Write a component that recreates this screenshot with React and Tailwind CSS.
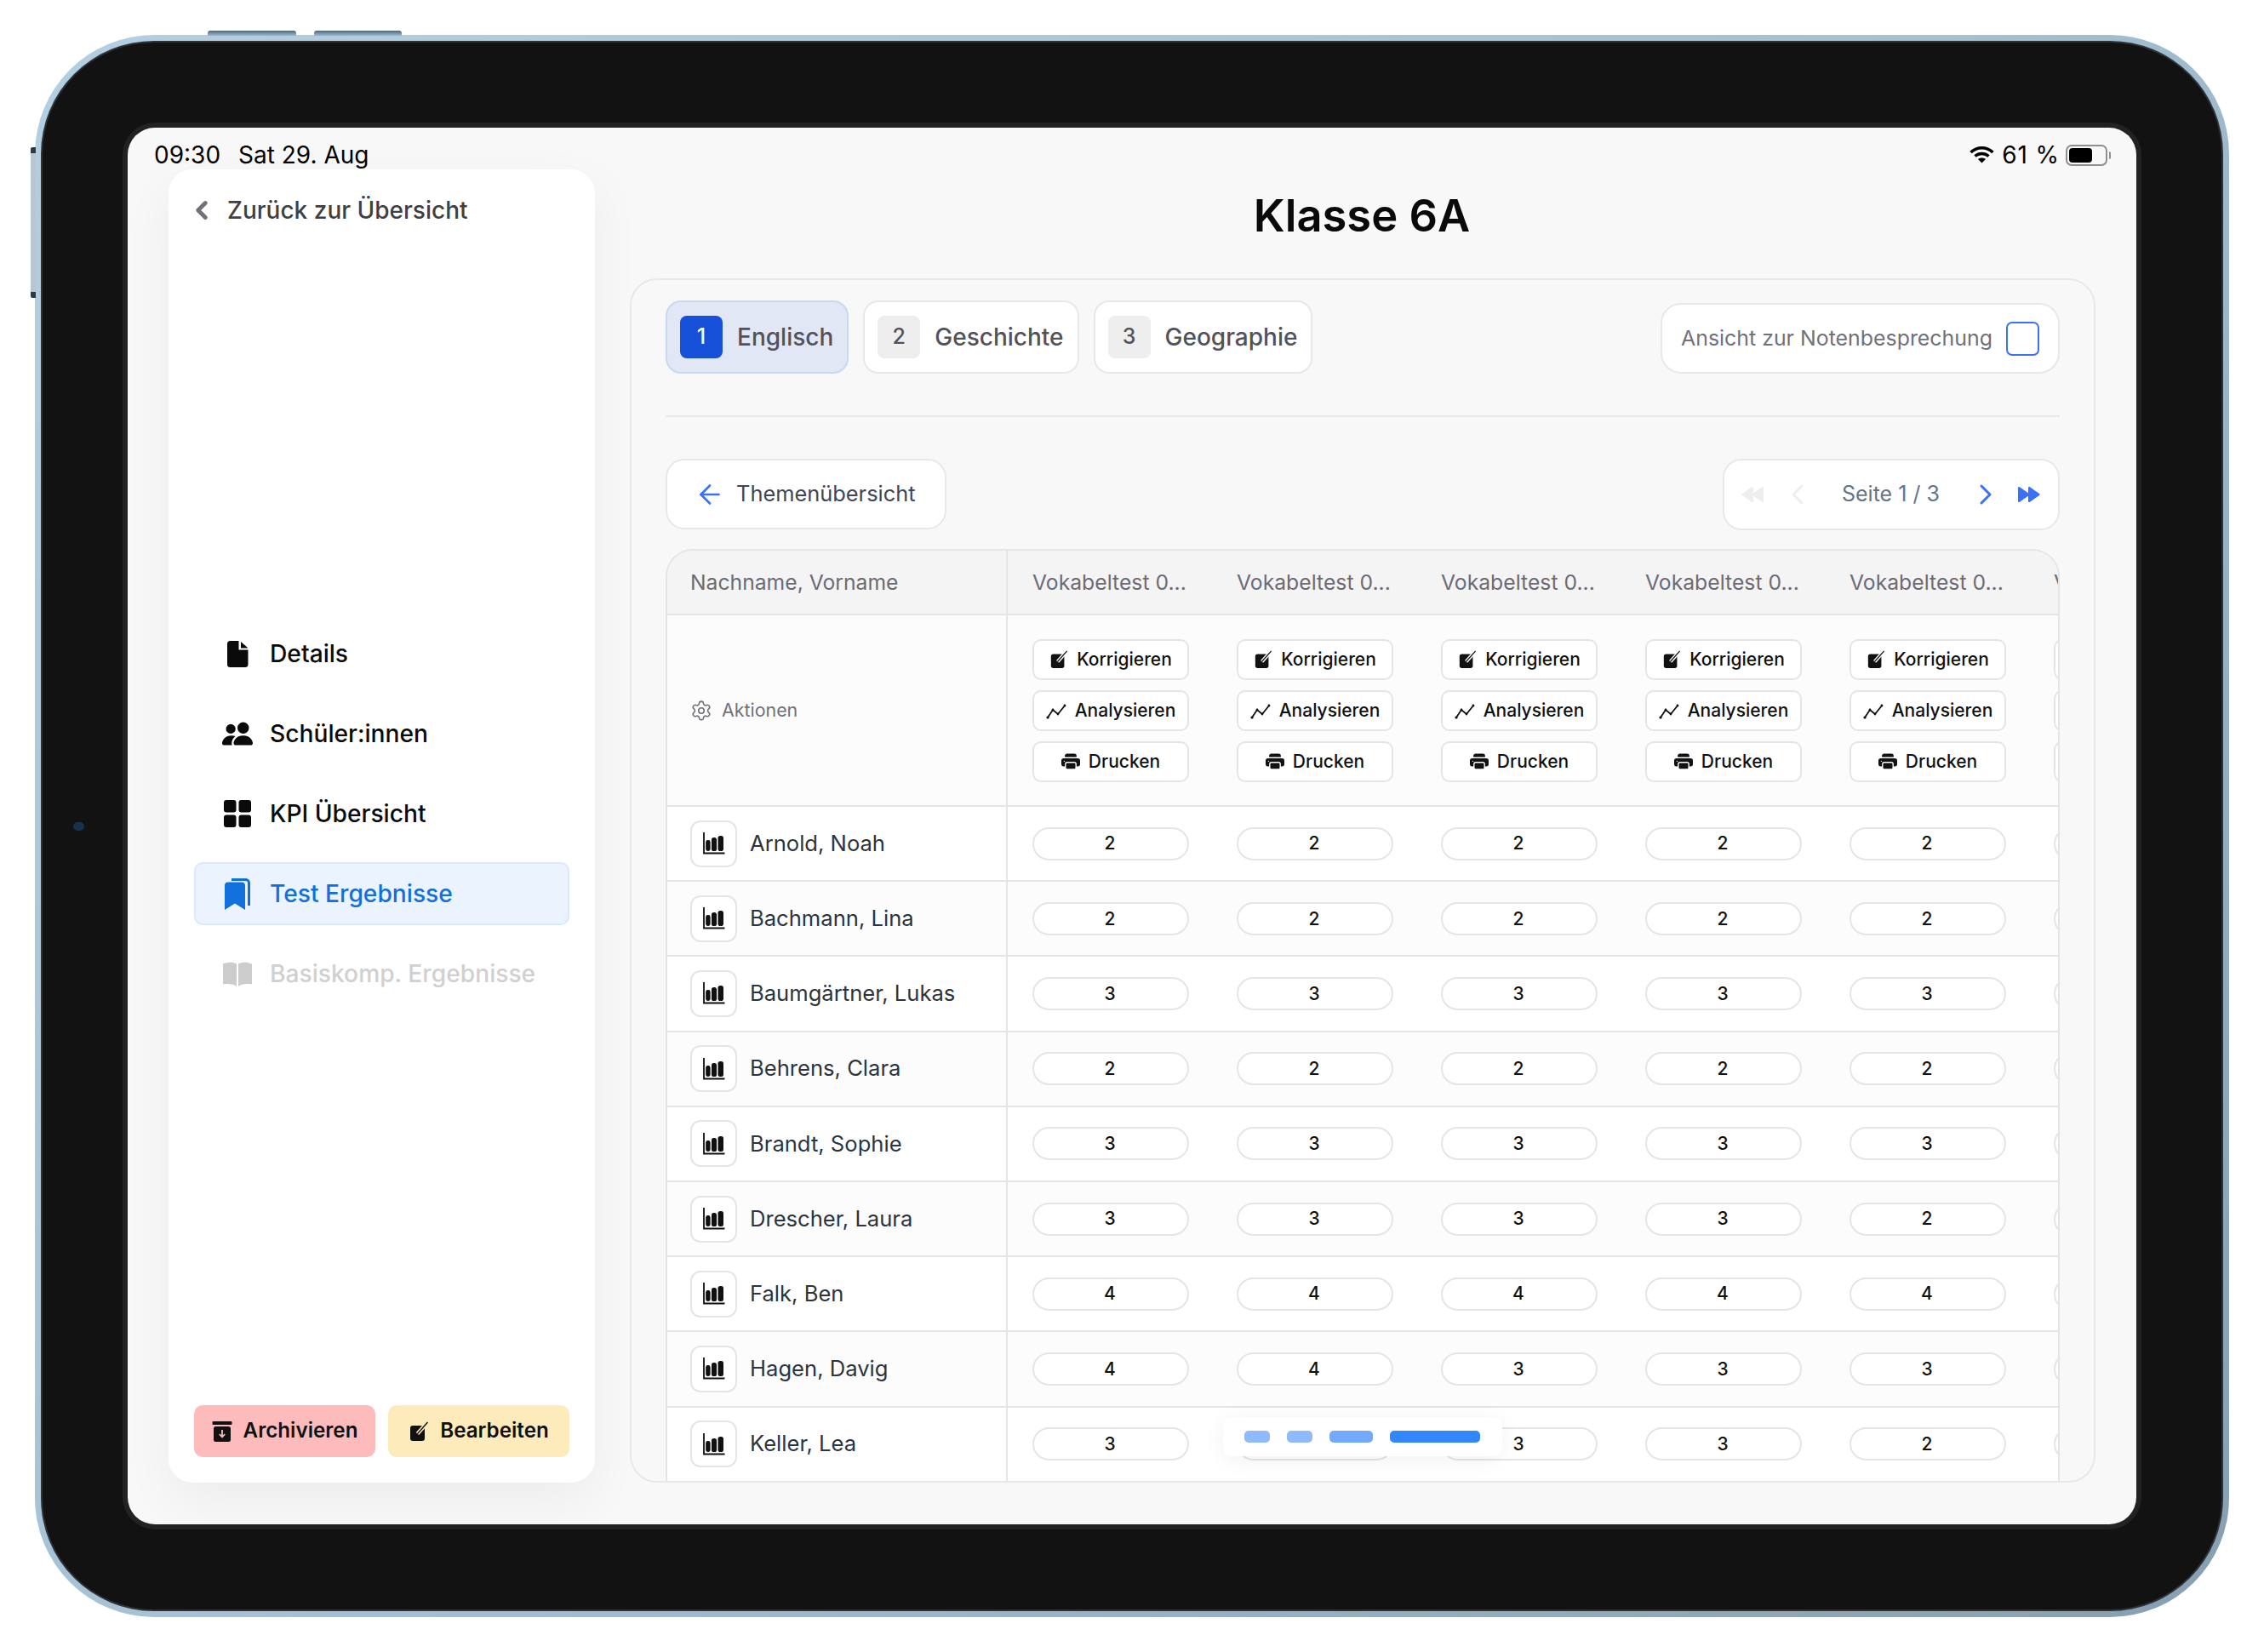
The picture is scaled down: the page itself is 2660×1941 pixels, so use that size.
import React from 'react'
import { ChevronLeft, ChevronRight, ArrowLeft, Settings } from 'lucide-react'
import { BsPeopleFill, BsPrinterFill } from 'react-icons/bs'

const students = [
  ['Arnold, Noah', [2, 2, 2, 2, 2]],
  ['Bachmann, Lina', [2, 2, 2, 2, 2]],
  ['Baumgärtner, Lukas', [3, 3, 3, 3, 3]],
  ['Behrens, Clara', [2, 2, 2, 2, 2]],
  ['Brandt, Sophie', [3, 3, 3, 3, 3]],
  ['Drescher, Laura', [3, 3, 3, 3, 2]],
  ['Falk, Ben', [4, 4, 4, 4, 4]],
  ['Hagen, Davig', [4, 4, 3, 3, 3]],
  ['Keller, Lea', [3, 3, 3, 3, 2]],
]

const columns = [0, 1, 2, 3, 4, 5]

const PenNote = ({ size = 22 }) => (
  <svg width={size} height={size} viewBox="0 0 24 24">
    <rect x="2" y="5" width="17" height="18" rx="3" fill="#111" />
    <path d="M10.5 14.5 L22.5 1" stroke="#fff" strokeWidth="4.5" />
    <path d="M10.5 14.5 L22.5 1" stroke="#111" strokeWidth="1.4" />
  </svg>
)

const PenNoteYellow = () => (
  <svg width="24" height="24" viewBox="0 0 24 24">
    <rect x="2" y="5" width="17" height="18" rx="3" fill="#111" />
    <path d="M10.5 14.5 L22.5 1" stroke="#feebbb" strokeWidth="4.5" />
    <path d="M10.5 14.5 L22.5 1" stroke="#111" strokeWidth="1.4" />
  </svg>
)

const ChartLine = () => (
  <svg width="24" height="20" viewBox="0 0 24 20" fill="none">
    <path d="M2 18 L8 9 L14 14 L22 4" stroke="#111" strokeWidth="1.8" />
    <circle cx="2" cy="18" r="1.6" fill="#111" />
    <circle cx="8" cy="9" r="1.4" fill="#111" />
    <circle cx="14" cy="14" r="1.4" fill="#111" />
    <circle cx="22" cy="4" r="1.4" fill="#111" />
  </svg>
)

const BarsIcon = () => (
  <svg width="26" height="26" viewBox="0 0 26 26">
    <path d="M1 0 V24.5 H25.5" fill="none" stroke="#111" strokeWidth="1.8" />
    <rect x="3.2" y="9" width="5.4" height="13" rx="2.4" fill="#111" />
    <rect x="10" y="6" width="6" height="16" rx="2.6" fill="#111" />
    <rect x="17.5" y="4" width="6.5" height="18" rx="2.8" fill="#111" />
  </svg>
)

const ArchiveDown = () => (
  <svg width="24" height="24" viewBox="0 0 24 24">
    <rect x="0.5" y="0" width="23" height="4" rx="1" fill="#111" />
    <rect x="2" y="6" width="20" height="18" rx="2.5" fill="#111" />
    <path d="M12 10 V18 M8.8 15 L12 18.5 L15.2 15" fill="none" stroke="#febbbb" strokeWidth="1.8" />
  </svg>
)

const DoubleArrow = ({ color, flip }) => (
  <svg width="27" height="20" viewBox="0 0 27 20" className={flip ? 'rotate-180' : ''}>
    <path d="M1 2 C1 1 2 0.6 3 1.2 L14 9 C14.8 9.6 14.8 10.4 14 11 L3 18.8 C2 19.4 1 19 1 18 Z" fill={color} />
    <path d="M13 2 C13 1 14 0.6 15 1.2 L26 9 C26.8 9.6 26.8 10.4 26 11 L15 18.8 C14 19.4 13 19 13 18 Z" fill={color} />
  </svg>
)

const FileIcon = () => (
  <svg width="25" height="31" viewBox="0 0 25 31" fill="#0a0a0a">
    <path d="M3.5 0 H13.5 V10.5 H24.5 V27.5 A3.5 3.5 0 0 1 21 31 H3.5 A3.5 3.5 0 0 1 0 27.5 V3.5 A3.5 3.5 0 0 1 3.5 0 Z" />
    <path d="M16 1 L24.5 8.5 H16 Z" />
  </svg>
)

const GridIcon = () => (
  <svg width="32" height="32" viewBox="0 0 32 32" fill="#0a0a0a">
    <rect x="0" y="0" width="14.5" height="14.5" rx="3" />
    <rect x="17.5" y="0" width="14.5" height="14.5" rx="3" />
    <rect x="0" y="17.5" width="14.5" height="14.5" rx="3" />
    <rect x="17.5" y="17.5" width="14.5" height="14.5" rx="3" />
  </svg>
)

const BookmarksIcon = () => (
  <svg width="30" height="37" viewBox="0 0 30 37">
    <path d="M8 1.5 H24 A4 4 0 0 1 28.5 5.5 V32" fill="none" stroke="#1170dc" strokeWidth="3" />
    <path d="M4 4.5 H20 A4 4 0 0 1 24 8.5 V37 L12 29.5 L0 37 V8.5 A4 4 0 0 1 4 4.5 Z" fill="#1170dc" />
  </svg>
)

const BookIcon = () => (
  <svg width="34" height="29" viewBox="0 0 34 29" fill="#cccccc">
    <path d="M0 2.5 C6 0 12 0 16 2.5 V29 C12 26 6 25.5 0 26.5 Z" />
    <path d="M34 2.5 C28 0 22 0 18 2.5 V29 C22 26 28 25.5 34 26.5 Z" />
  </svg>
)

const WifiIcon = () => (
  <svg width="29" height="20" viewBox="0 0 29 20" fill="none" stroke="#000" strokeWidth="3.4">
    <path d="M1.5 7 C9 0 20 0 27.5 7" />
    <path d="M6.5 11.5 C11 7.5 18 7.5 22.5 11.5" />
    <path d="M14.5 19.5 L10 15 C12.5 13 16.5 13 19 15 Z" fill="#000" stroke="none" />
  </svg>
)

const NavItem = ({ icon, label, active, disabled }) => (
  <div className={`flex items-center h-[74px] pl-[29px] gap-[18px] rounded-[10px] border-2 text-[28.2px] font-medium ${active ? 'bg-[#ebf3fe] border-[#dbe9fd] text-[#1170dc]' : disabled ? 'border-transparent text-[#d0d0d0]' : 'border-transparent text-[#0a0a0a]'}`}>
    <span className="w-[40px] flex justify-center">{icon}</span>
    {label}
  </div>
)

const Tab = ({ num, label, active }) => (
  <div className={`flex items-center h-[86px] pl-[15px] pr-[16px] gap-[17px] rounded-[18px] border-2 text-[28px] font-medium text-[#52525b] ${active ? 'bg-[#e1e7f5] border-[#c9d8f3]' : 'bg-white border-[#e8e8e8]'}`}>
    <span className={`w-[50px] h-[50px] flex items-center justify-center rounded-[8px] text-[25px] ${active ? 'bg-[#1650d8] text-white' : 'bg-[#eeeeee] text-[#52525b]'}`}>{num}</span>
    {label}
  </div>
)

const ActionBtn = ({ icon, label }) => (
  <div className="flex items-center justify-center gap-[10px] w-[184px] h-[48px] shrink-0 bg-white rounded-[10px] border-2 border-[#e5e5e5] text-[21px] font-medium text-[#111]">
    {icon}
    {label}
  </div>
)

const App = () => {
  return (
    <div className="w-[2660px] h-[1941px] bg-white pt-[41px] pl-[41px] relative font-['Inter',sans-serif]">
      {/* hardware buttons */}
      <div className="absolute left-[244px] top-[36px] w-[104px] h-[6px] rounded-t-[3px] bg-[linear-gradient(180deg,#4f6578,#9db8cb)]" />
      <div className="absolute left-[369px] top-[36px] w-[103px] h-[6px] rounded-t-[3px] bg-[linear-gradient(180deg,#4f6578,#9db8cb)]" />
      <div className="absolute left-[36px] top-[173px] w-[6px] h-[177px] rounded-l-[2px] bg-[linear-gradient(180deg,#2c3a46_0,#2c3a46_4%,#b8c6d0_4%,#b8c6d0_96%,#2c3a46_96%)]" />

      <div className="w-[2578px] h-[1859px] p-[9px] rounded-[140px] bg-[linear-gradient(135deg,#b4cfe1,#a4c0d3_50%,#86a0b1)]">
        <div className="w-full h-full p-[94px] rounded-[131px] bg-[#121212] relative shadow-[0_0_0_2px_#2e3236]">
          <div className="absolute left-[36px] top-[916px] w-[13px] h-[10px] rounded-full bg-[#16324f]" />
          <div className="w-full h-full p-[6px] rounded-[38px] bg-[#222222]">
            <div className="w-full h-full flex flex-col rounded-[32px] bg-[#f8f8f8] overflow-hidden">

              {/* status bar */}
              <div className="h-[49px] shrink-0 flex items-end justify-between pl-[31px] pr-[30px] text-[28px] leading-[34px] text-black">
                <div className="flex gap-[21px]"><span>09:30</span><span>Sat 29. Aug</span></div>
                <div className="flex items-center gap-[9px]">
                  <WifiIcon />
                  <span className="tracking-[0.9px] -mr-[2px]">61 %</span>
                  <div className="flex items-center gap-[2px]">
                    <div className="w-[49px] h-[25px] rounded-[7px] border-2 border-[#8e8e8e] p-[2px]">
                      <div className="w-[27px] h-full rounded-[4px] bg-black" />
                    </div>
                    <div className="w-[2px] h-[9px] bg-[#8e8e8e] rounded-r-full" />
                  </div>
                </div>
              </div>

              <div className="flex-1 min-h-0 flex pl-[48px] pb-[49px] gap-[41px]">
                {/* sidebar */}
                <aside className="w-[501px] flex flex-col px-[30px] pb-[30px] pt-[28px] bg-white rounded-[28px] shadow-[0_20px_60px_rgba(0,0,0,0.05)]">
                  <div className="flex items-center h-[40px] text-[28px] font-medium text-[#3f3f46]">
                    <ChevronLeft size={34} strokeWidth={3.4} className="text-[#71717a] -ml-[8px] mr-[13px]" />
                    Zurück zur Übersicht
                  </div>
                  <nav className="mt-[464px] flex flex-col gap-[20px]">
                    <NavItem icon={<FileIcon />} label="Details" />
                    <NavItem icon={<BsPeopleFill size={36} />} label="Schüler:innen" />
                    <NavItem icon={<GridIcon />} label="KPI Übersicht" />
                    <NavItem active icon={<BookmarksIcon />} label="Test Ergebnisse" />
                    <NavItem disabled icon={<BookIcon />} label="Basiskomp. Ergebnisse" />
                  </nav>
                  <div className="mt-auto flex gap-[15px]">
                    <button className="flex-1 h-[61px] flex items-center justify-center gap-[13px] rounded-[10px] bg-[#febbbb] text-[24.2px] font-semibold text-[#111]">
                      <ArchiveDown />
                      Archivieren
                    </button>
                    <button className="flex-1 h-[61px] flex items-center justify-center gap-[13px] rounded-[10px] bg-[#feebbb] text-[24.2px] font-semibold text-[#111]">
                      <PenNoteYellow />
                      Bearbeiten
                    </button>
                  </div>
                </aside>

                {/* main */}
                <main className="w-[1722px] min-h-0 flex flex-col">
                  <div className="h-[128px] shrink-0 flex items-start justify-center pt-[21px] pr-[2px]">
                    <h1 className="text-[52.5px] leading-[66px] font-semibold text-[#0a0a0a]">Klasse 6A</h1>
                  </div>
                  <div className="flex-1 min-h-0 flex flex-col px-[40px] pt-[24px] rounded-[32px] border-2 border-[#e8e8e8] overflow-hidden">
                    <div className="flex items-end justify-between">
                      <div className="flex gap-[17px]">
                        <Tab active num="1" label="Englisch" />
                        <Tab num="2" label="Geschichte" />
                        <Tab num="3" label="Geographie" />
                      </div>
                      <div className="flex items-center h-[83px] px-[22px] gap-[16px] bg-white rounded-[24px] border-2 border-[#e8e8e8] text-[24.9px] text-[#71717a]">
                        Ansicht zur Notenbesprechung
                        <span className="w-[39px] h-[40px] rounded-[7px] border-2 border-[#3b72f5] bg-white" />
                      </div>
                    </div>
                    <div className="mt-[49px] h-[2px] shrink-0 bg-[#e8e8e8]" />
                    <div className="mt-[49px] flex justify-between">
                      <div className="flex items-center h-[83px] w-[330px] pl-[32px] gap-[13px] bg-white rounded-[22px] border-2 border-[#e8e8e8] text-[25.4px] text-[#3f4654]">
                        <ArrowLeft size={36} strokeWidth={1.8} className="text-[#3b72f5]" />
                        Themenübersicht
                      </div>
                      <div className="flex items-center h-[84px] w-[396px] pl-[20px] bg-white rounded-[22px] border-2 border-[#e8e8e8] text-[25px] text-[#64748b]">
                        <DoubleArrow flip color="#eeeeee" />
                        <ChevronLeft size={40} strokeWidth={1.8} className="ml-[19px] text-[#eeeeee]" />
                        <span className="ml-[32px]">Seite 1 / 3</span>
                        <ChevronRight size={40} strokeWidth={1.8} className="ml-[34px] text-[#3b72f5]" />
                        <span className="ml-[17px]"><DoubleArrow color="#3b72f5" /></span>
                      </div>
                    </div>

                    {/* table */}
                    <div className="mt-[22px] flex-1 min-h-0 rounded-t-[32px] border-x-2 border-t-2 border-[#e5e5e5] overflow-hidden">
                      <div className="flex h-[76px] border-b-2 border-[#e5e5e5] bg-[#f4f4f5] text-[24.7px] text-[#6b6b75]">
                        <div className="w-[400px] shrink-0 flex items-center pl-[27px] pt-[2px] border-r-2 border-[#e5e5e5]">Nachname, Vorname</div>
                        {columns.map((c) => (
                          <div key={c} className="w-[240px] shrink-0 flex items-center pl-[29px] pt-[2px] whitespace-nowrap tracking-[0.03px]">Vokabeltest 0...</div>
                        ))}
                      </div>
                      <div className="flex h-[225px] border-b-2 border-[#e5e5e5] bg-[#fcfcfc]">
                        <div className="w-[400px] shrink-0 flex items-center gap-[11px] pl-[27px] border-r-2 border-[#e5e5e5] text-[21.4px] text-[#71717a]">
                          <Settings size={26} strokeWidth={1.5} />
                          Aktionen
                        </div>
                        {columns.map((c) => (
                          <div key={c} className="w-[240px] shrink-0 flex flex-col justify-center gap-[12px] pl-[29px]">
                            <ActionBtn icon={<PenNote />} label="Korrigieren" />
                            <ActionBtn icon={<ChartLine />} label="Analysieren" />
                            <ActionBtn icon={<BsPrinterFill size={22} />} label="Drucken" />
                          </div>
                        ))}
                      </div>
                      {students.map(([name, grades], i) => (
                        <div key={name} className={`flex h-[88.2px] border-b-2 border-[#e5e5e5] ${i % 2 === 0 ? 'bg-white' : 'bg-[#fcfcfc]'}`}>
                          <div className="w-[400px] shrink-0 flex items-center gap-[15px] pl-[27px] border-r-2 border-[#e5e5e5] text-[25.6px] text-[#2b3440]">
                            <span className="w-[55px] h-[55px] flex items-center justify-center bg-white rounded-[12px] border-2 border-[#e5e5e5]"><BarsIcon /></span>
                            {name}
                          </div>
                          {columns.map((c) => (
                            <div key={c} className="w-[240px] shrink-0 flex items-center pl-[29px]">
                              <div className="w-[184px] h-[39px] pr-[2px] flex items-center justify-center bg-white rounded-full border-2 border-[#e5e5e5] text-[21px] font-medium text-[#111]">{grades[c] ?? grades[4]}</div>
                            </div>
                          ))}
                        </div>
                      ))}
                    </div>
                  </div>
                </main>
              </div>
            </div>
          </div>
        </div>
      </div>

      {/* page indicator over the table */}
      <div className="absolute left-[1437px] top-[1665px] w-[328px] h-[46px] flex items-center gap-[20px] pl-[25px] bg-white rounded-[10px] shadow-[0_4px_24px_rgba(0,0,0,0.06)]">
        <span className="w-[30px] h-[14px] rounded-[5px] bg-[#8fbafe]" />
        <span className="w-[30px] h-[14px] rounded-[5px] bg-[#8fbafe]" />
        <span className="w-[51px] h-[14px] rounded-[5px] bg-[#73a9fe]" />
        <span className="w-[106px] h-[14px] rounded-[5px] bg-[#3286fe]" />
      </div>
    </div>
  )
}

export default App
